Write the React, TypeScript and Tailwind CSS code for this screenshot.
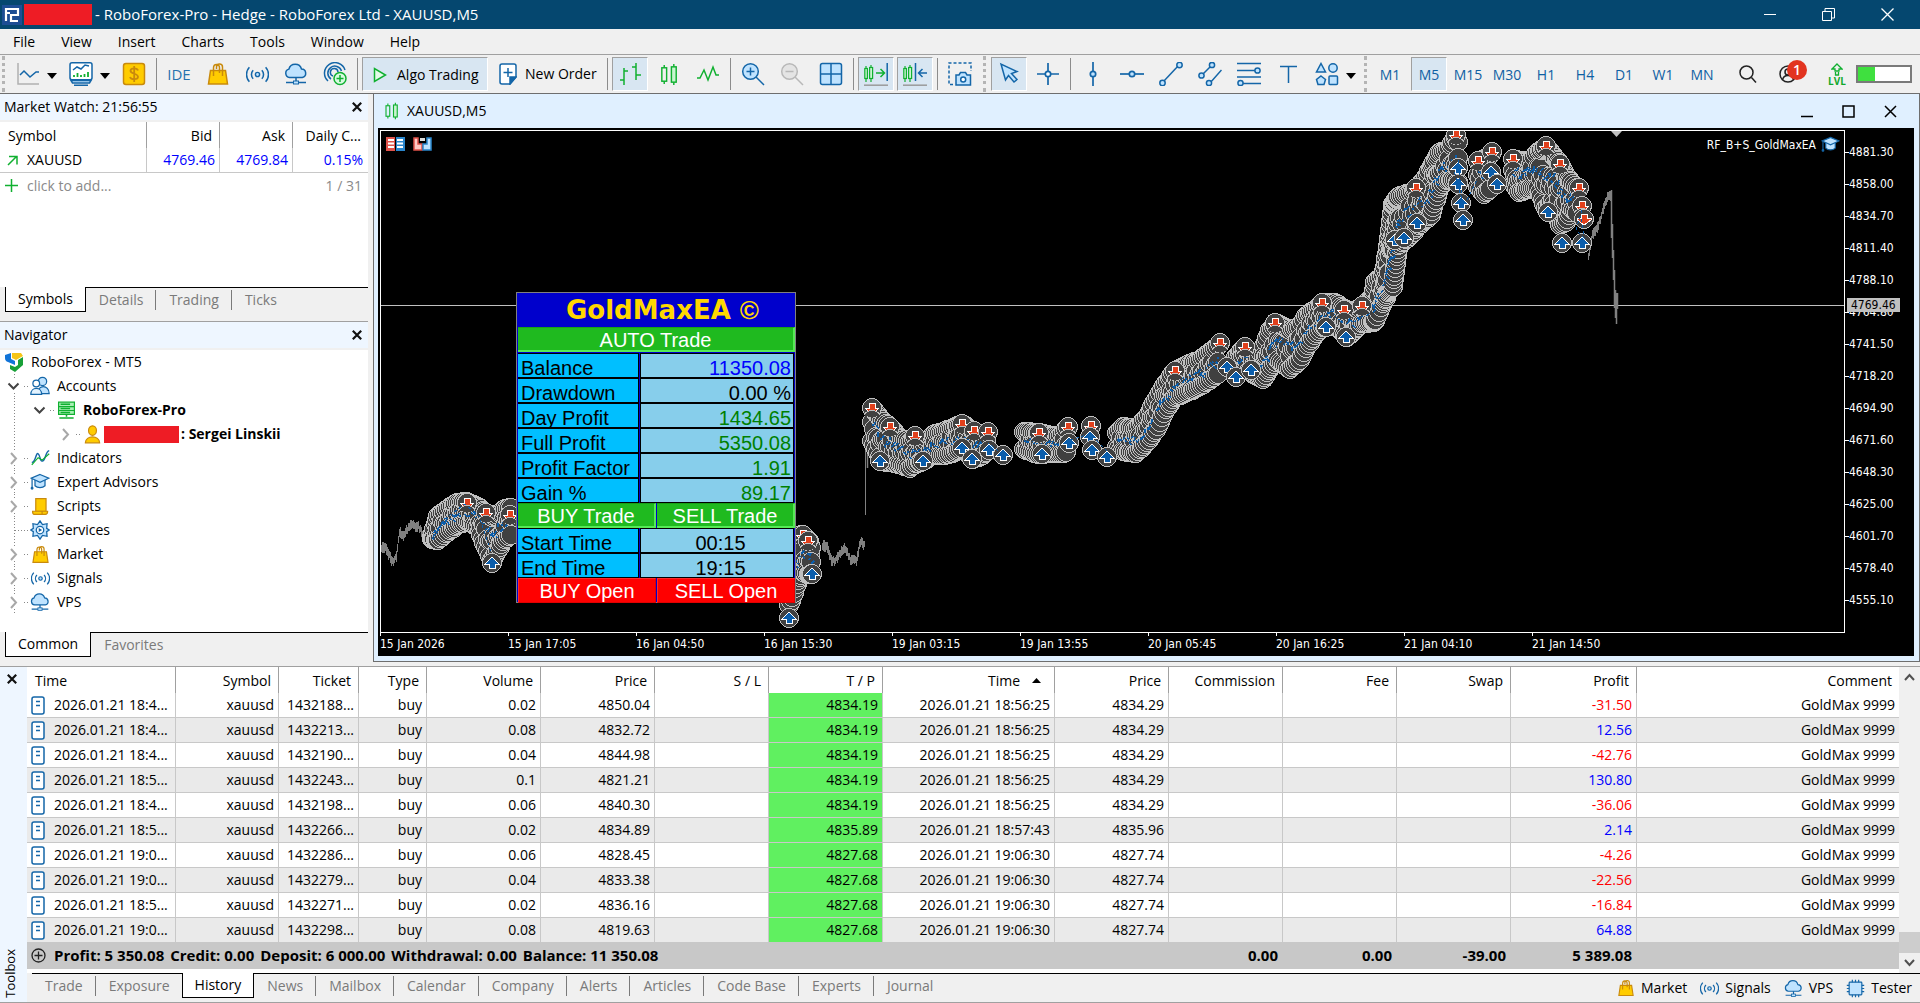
import React from "react";

const BLUE = "#1466a8";
const SKY = "#bfe3ff";
const GREEN = "#10b030";
const GOLD = "#ffcc00";
const AMBER = "#c98a0c";

type IconProps = { size?: number; children: React.ReactNode; color?: string; width?: number };

function Icon({ size = 24, children, color = BLUE, width = 1.5 }: IconProps) {
  return (
    <svg width={size} height={size} viewBox="0 0 24 24" fill="none" stroke={color} strokeWidth={width} aria-hidden="true" className="shrink-0">
      {children}
    </svg>
  );
}

const BagIcon = ({ size = 24 }: { size?: number }) => (
  <Icon size={size} color={AMBER}>
    <path d="M4.500 8.500h15l2 13.500h-19z" fill={GOLD} />
    <path d="M7.500 14V6a3 3.500 0 0 1 6 0v5M10.500 7V5a3 3 0 0 1 6 0v9" />
  </Icon>
);
const SignalIcon = ({ size = 24 }: { size?: number }) => (
  <Icon size={size}>
    <circle cx="12" cy="12" r="2.200" fill={SKY} />
    <path d="M7.500 7.500a6.500 6.500 0 0 0 0 9M16.500 7.500a6.500 6.500 0 0 1 0 9M3.500 4.500a11 11 0 0 0 0 15M20.500 4.500a11 11 0 0 1 0 15" strokeWidth="1.600" />
  </Icon>
);
const CloudIcon = ({ size = 24 }: { size?: number }) => (
  <Icon size={size}>
    <path d="M5.500 15.500a4.300 4.300 0 0 1-.6-8.400A6.500 6.500 0 0 1 17.500 7a4.300 4.300 0 0 1 .8 8.500z" fill={SKY} />
    <path d="M12 15.500v4M2 20.500h20M9.500 20.500h5" />
    <rect x="9.500" y="19" width="5" height="3" fill={SKY} strokeWidth="1" />
  </Icon>
);
const CapIcon = ({ size = 24, fill = SKY }: { size?: number; fill?: string }) => (
  <Icon size={size}>
    <path d="M6 9.500v7c3 3 9 3 12 0v-7" fill={fill} />
    <path d="M12 3 22.500 7.500 12 12.500 1.500 7.500z" fill={fill} />
    <path d="M2.500 8v11" />
    <circle cx="2.500" cy="19.500" r="1" fill={BLUE} />
  </Icon>
);
const CandlesIcon = ({ size = 24 }: { size?: number }) => (
  <Icon size={size} color={GREEN}>
    <path d="M6.500 2v3M6.500 19v3M16.500 1v3M16.500 20v3" />
    <rect x="4" y="5" width="5" height="14" />
    <rect x="14" y="4" width="5" height="16" fill="#c8f5d0" />
  </Icon>
);
const MiniCandles = () => (
  <g stroke={GREEN} strokeWidth="1.200">
    <path d="M2 4v16M7 3v17" />
    <rect x=".8" y="6.500" width="2.600" height="10" fill="#c8f5d0" />
    <rect x="5.600" y="5.500" width="3" height="11" fill="#c8f5d0" />
  </g>
);

function ToolButton({ label, active, caret, children }: { label: string; active?: boolean; caret?: boolean; children: React.ReactNode }) {
  return (
    <button
      type="button"
      aria-label={label}
      className={
        "flex h-[34px] shrink-0 items-center border " +
        (active ? "border-t-[#a0a0a0] border-l-[#a0a0a0] border-r-white border-b-white bg-[#d8e6f2] " : "border-transparent ") +
        (caret ? "w-[50px] gap-1 pl-[5px]" : "w-9 justify-center")
      }
    >
      {children}
      {caret && (
        <svg width="10" height="6" aria-hidden="true" className="mt-1 ml-[3px]">
          <path d="M0 0h10L5 6z" fill="#000" />
        </svg>
      )}
    </button>
  );
}

const Sep = () => <span className="mx-px h-8 w-px shrink-0 bg-[#8c8c8c]" />;
const Grip = () => <span className="mx-[2px] h-9 w-[3px] shrink-0 border-l-[3px] border-dotted border-[#b4b4b4]" />;

function Toolbar() {
  const frames = ["M1", "M5", "M15", "M30", "H1", "H4", "D1", "W1", "MN"];
  return (
    <div className="flex h-10 shrink-0 items-center gap-[3px] overflow-hidden border-y border-t-[#a0a0a0] border-b-[#6e6e6e] bg-[#f0f0f0] pr-2">
      <Grip />
      <ToolButton label="Line chart" caret>
        <Icon color="#b0b0b0"><path d="M2 1v21h21" /><path d="M4 13l4-4 6 6 6-5h3" stroke={BLUE} /></Icon>
      </ToolButton>
      <ToolButton label="Templates" caret>
        <Icon>
          <rect x="1" y="0.800" width="22" height="17" rx="2" fill="#fff" />
          <path d="M4 8l4-3 4 2 4-4 4 1" />
          <path d="M5 15v-2M8.500 15v-4M12 15v-2M15.500 15v-3M19 15v-5" stroke={GREEN} strokeWidth="1.800" />
          <path d="M2 18.500h20l-1.500 2.500h-17zM5 23.200h14" fill={SKY} />
        </Icon>
      </ToolButton>
      <ToolButton label="Quotes">
        <Icon color={AMBER}>
          <rect x="1.500" y="1.500" width="21" height="21" rx="2.500" fill={GOLD} />
          <path d="M16 8.500c-1-3-7.500-2.800-7.500.3 0 3.500 7.500 2.400 7.500 6 0 3.200-7 3.200-8 .2M12.200 4v16" strokeWidth="1.800" />
        </Icon>
      </ToolButton>
      <Sep />
      <button type="button" className="flex h-[34px] w-9 shrink-0 items-center justify-center text-[15px] text-[#2673ae]">IDE</button>
      <ToolButton label="Market"><BagIcon /></ToolButton>
      <ToolButton label="Signals"><SignalIcon size={23} /></ToolButton>
      <ToolButton label="VPS"><CloudIcon /></ToolButton>
      <ToolButton label="Social">
        <Icon>
          <path d="M5 19A10.500 10.500 0 1 1 22 8M8 17a7 7 0 1 1 10.500-8M10 14a3.800 3.800 0 1 1 5-4" />
          <circle cx="17" cy="16.500" r="6" fill="#d9fbe0" stroke={GREEN} />
          <path d="M17 13v7M13.500 16.500h7" stroke={GREEN} />
        </Icon>
      </ToolButton>
      <Sep />
      <button type="button" className="flex h-[34px] w-[126px] shrink-0 items-center gap-[10px] border border-t-[#a0a0a0] border-r-white border-b-white border-l-[#a0a0a0] bg-[#d8e6f2] pt-px pl-[10px] text-sm whitespace-nowrap">
        <svg width="14" height="16" aria-hidden="true" className="shrink-0"><path d="M1.500 1.500v13L12.500 8z" fill="#e4fbe8" stroke={GREEN} strokeWidth="1.500" /></svg>
        Algo Trading
      </button>
      <button type="button" className="flex h-[34px] w-[112px] shrink-0 items-center gap-2 pl-2 text-sm whitespace-nowrap">
        <svg width="18" height="22" fill="none" stroke={BLUE} strokeWidth="1.500" aria-hidden="true" className="shrink-0">
          <path d="M3 1h12q2 0 2 2v11l-6 7H3q-2 0-2-2V3q0-2 2-2z" fill="#fff" />
          <path d="M11 21v-7h6z" fill={BLUE} />
          <path d="M9 5v9M4.500 9.500h9" />
        </svg>
        New Order
      </button>
      <Sep />
      <ToolButton label="Bar chart" active>
        <Icon color={GREEN}><path d="M6 6v17M2 18h4M6 9h4M18 1v17M14 5h4M18 13h5" /></Icon>
      </ToolButton>
      <ToolButton label="Candlesticks"><CandlesIcon size={23} /></ToolButton>
      <ToolButton label="Line">
        <Icon color={GREEN}><path d="M1 16h3l4-8 4 10 5-13 3 8h3" /></Icon>
      </ToolButton>
      <Sep />
      <ToolButton label="Zoom in">
        <Icon><circle cx="9.500" cy="9.500" r="7.800" fill={SKY} /><path d="M15 15l8 8M9.500 5.500v8M5.500 9.500h8" /></Icon>
      </ToolButton>
      <ToolButton label="Zoom out">
        <Icon color="#b8b8b8"><circle cx="9.500" cy="9.500" r="7.800" fill="#e4e4e4" /><path d="M15 15l8 8M5.500 9.500h8" /></Icon>
      </ToolButton>
      <ToolButton label="Tile windows">
        <Icon><rect x="1.500" y="1.500" width="21" height="21" rx="2" fill={SKY} /><path d="M12 1.500v21M1.500 12h21" /></Icon>
      </ToolButton>
      <Sep />
      <ToolButton label="Auto scroll" active>
        <Icon><MiniCandles /><path d="M12 11h8M16.500 7l4 4-4 4" stroke={GREEN} /><path d="M23.200 1v18" /><path d="M0 23.200h24" stroke="#9a9a9a" /></Icon>
      </ToolButton>
      <ToolButton label="Chart shift" active>
        <Icon><MiniCandles /><path d="M12.500 1v18M24 11h-8M19.500 7l-4 4 4 4" /><path d="M0 23.200h24" stroke="#9a9a9a" /></Icon>
      </ToolButton>
      <Sep />
      <ToolButton label="Screenshot">
        <Icon>
          <path d="M5 22.500H1V1h22v8" strokeDasharray="3 2" />
          <path d="M8 13h3l1.500-2.500h5L19 13h3.500v10H8z" fill={SKY} />
          <circle cx="15.200" cy="17.500" r="2.500" fill="#fff" />
        </Icon>
      </ToolButton>
      <Grip />
      <ToolButton label="Cursor" active>
        <Icon><path d="M4 2l4.500 16 3-4.500 5.500 6.500 3-2.500-5.500-6 5.500-2z" fill={SKY} /></Icon>
      </ToolButton>
      <ToolButton label="Crosshair">
        <Icon width={1.7}><path d="M12 1v22M1 12h22" /><circle cx="12" cy="12" r="2.700" fill="#fff" /></Icon>
      </ToolButton>
      <Sep />
      <ToolButton label="Vertical line"><Icon width={1.7}><path d="M12 0v24" /><circle cx="12" cy="12" r="2.700" fill={SKY} /></Icon></ToolButton>
      <ToolButton label="Horizontal line"><Icon width={1.7}><path d="M0 12h24" /><circle cx="12" cy="12" r="2.700" fill={SKY} /></Icon></ToolButton>
      <ToolButton label="Trendline"><Icon><path d="M4 20L20 3" /><circle cx="3.500" cy="21" r="2.700" fill={SKY} /><circle cx="20.500" cy="3" r="2.700" fill={SKY} /></Icon></ToolButton>
      <ToolButton label="Channel">
        <Icon><path d="M4 13L14 3M12 21L23.500 8" /><circle cx="3.500" cy="13.500" r="2.600" fill={SKY} /><circle cx="14" cy="3" r="2.600" fill={SKY} /><circle cx="11" cy="21" r="2.600" fill={SKY} /></Icon>
      </ToolButton>
      <ToolButton label="Fibonacci">
        <Icon><path d="M0 1.500h24M0 8.500h18M0 15h24M5 21.500h19" /><circle cx="20.500" cy="8.500" r="2.600" fill={SKY} /><circle cx="3.500" cy="21" r="2.600" fill={SKY} /></Icon>
      </ToolButton>
      <ToolButton label="Text"><Icon><path d="M4 4.500h17M12.500 4.500V21" /></Icon></ToolButton>
      <ToolButton label="Objects" caret>
        <Icon><path d="M6 1.500l4.500 8.500h-9zM6 14l4.500 3.500L9 22.500H3l-1.500-5z" fill={SKY} /><circle cx="18" cy="6" r="4.200" fill={SKY} /><rect x="14" y="14" width="8.500" height="8.500" rx="1" fill={SKY} /></Icon>
      </ToolButton>
      <Grip />
      {frames.map((f) => (
        <button
          key={f}
          type="button"
          className={
            "flex h-[34px] w-9 shrink-0 items-center justify-center border pt-px text-sm text-[#0f60a3] " +
            (f === "M5" ? "border-t-[#a0a0a0] border-r-white border-b-white border-l-[#a0a0a0] bg-[#d8e6f2]" : "border-transparent")
          }
        >
          {f}
        </button>
      ))}
      <div className="ml-auto flex items-center">
        <button type="button" aria-label="Search">
          <svg width="18" height="18" fill="none" stroke="#222" strokeWidth="1.500" aria-hidden="true"><circle cx="7.500" cy="7.500" r="6.500" /><path d="M12.500 12.500l4.500 5" /></svg>
        </button>
        <button type="button" aria-label="Account, 1 notification" className="relative mr-[30px] ml-[22px]">
          <svg width="18" height="18" fill="none" stroke="#222" strokeWidth="1.500" aria-hidden="true"><circle cx="9" cy="9" r="8" /><circle cx="9" cy="7" r="3" /><path d="M3.500 15c1-6 10-6 11 0" /></svg>
          <span className="absolute -top-[5px] left-2 flex size-5 items-center justify-center rounded-full bg-[#e23420] text-sm font-semibold text-white">1</span>
        </button>
        <span className="flex w-5 flex-col items-center text-[10px] leading-[10px] font-bold text-[#10a82c]">
          <svg width="12" height="13" aria-hidden="true"><path d="M6 1l5 5H8v2H4V6H1zM4.500 9v3h3V9" fill="none" stroke={GREEN} strokeWidth="1.300" /></svg>
          LVL
        </span>
        <span className="ml-[9px] h-[18px] w-14 border-2 border-[#7a7a7a] bg-white">
          <span className="block h-full w-1/3 bg-[#3fe03f]" />
        </span>
      </div>
    </div>
  );
}

function CloseButton({ label }: { label: string }) {
  return (
    <button type="button" aria-label={label} className="flex size-4 items-center justify-center">
      <svg width="10" height="10" stroke="#111" strokeWidth="2.200" aria-hidden="true"><path d="M.8.8l8.400 8.400M9.200.8L.8 9.200" /></svg>
    </button>
  );
}

function PanelHead({ title }: { title: string }) {
  return (
    <div className="flex h-[26px] shrink-0 items-center justify-between bg-[#eef6ff] pr-[3px] pl-1 text-sm">
      <h2>{title}</h2>
      <CloseButton label={"Close " + title} />
    </div>
  );
}

function Tabs({ items, active, className }: { items: string[]; active: string; className: string }) {
  const at = items.indexOf(active);
  return (
    <div role="tablist" className={"flex shrink-0 items-start " + className}>
      {items.map((t, i) => (
        <button
          key={t}
          role="tab"
          type="button"
          aria-selected={t === active}
          className={
            t === active
              ? "h-[25px] border border-t-0 border-black bg-white px-3 pb-px text-sm"
              : "flex h-[25px] items-center border-t border-black text-sm text-[#7a7a7a]"
          }
        >
          {t === active ? t : (
            <span className={"pr-3 pl-[13px] leading-5 " + (i + 1 < items.length && i + 1 !== at ? "border-r border-[#7a7a7a]" : "")}>{t}</span>
          )}
        </button>
      ))}
      <span className="flex-1 border-t border-black" />
    </div>
  );
}

function MarketWatch() {
  return (
    <section className="flex h-[227px] shrink-0 flex-col">
      <PanelHead title="Market Watch: 21:56:55" />
      <div className="mt-[2px] min-h-0 flex-1 bg-white">
        <table className="w-full table-fixed border-separate border-spacing-0 text-sm">
          <colgroup><col className="w-[147px]" /><col className="w-[73px]" /><col className="w-[73px]" /><col /></colgroup>
          <thead>
            <tr className="h-[26px]">
              <th className="border-r border-[#a0a0a0] pt-[2px] pl-2 text-left font-normal">Symbol</th>
              <th className="border-r border-[#a0a0a0] pt-[2px] pr-[7px] text-right font-normal">Bid</th>
              <th className="border-r border-[#a0a0a0] pt-[2px] pr-[7px] text-right font-normal">Ask</th>
              <th className="pt-[2px] pr-[7px] text-right font-normal whitespace-nowrap">Daily C...</th>
            </tr>
          </thead>
          <tbody>
            <tr className="h-[25px] text-right text-[#0000ff]">
              <td className="border-r border-b border-[#c8c8c8] pl-[7px] text-left text-black">
                <span className="flex items-center gap-[9px]">
                  <svg width="11" height="11" fill="none" stroke={GREEN} strokeWidth="1.500" aria-hidden="true"><path d="M1 10L9.500 1.500M2 1.500h8v8" /></svg>
                  XAUUSD
                </span>
              </td>
              <td className="border-r border-b border-[#c8c8c8] pr-1">4769.46</td>
              <td className="border-r border-b border-[#c8c8c8] pr-1">4769.84</td>
              <td className="border-b border-[#c8c8c8] pr-[5px]">0.15%</td>
            </tr>
          </tbody>
        </table>
        <div className="flex h-[25px] items-center pr-[6px] pl-1 text-sm text-[#8a8a8a]">
          <svg width="15" height="15" stroke={GREEN} strokeWidth="1.500" aria-hidden="true"><path d="M7.500 1v13M1 7.500h13" /></svg>
          <button type="button" className="ml-2">click to add...</button>
          <span className="ml-auto">1 / 31</span>
        </div>
      </div>
      <Tabs items={["Symbols", "Details", "Trading", "Ticks"]} active="Symbols" className="h-[34px] pl-[5px]" />
    </section>
  );
}

type Node = { label: React.ReactNode; icon: React.ReactNode; level: number; state: "open" | "closed" | "none"; bold?: boolean };

const nodes: Node[] = [
  { label: "Accounts", level: 0, state: "open", icon: <Icon size={20}><circle cx="15" cy="6.500" r="5" fill={SKY} /><path d="M9 21c0-11 14-11 14 0z" fill={SKY} /><circle cx="7.500" cy="9" r="4" fill="#fff" /><path d="M1 22c0-9.500 13-9.500 13 0z" fill="#e3f3ff" /></Icon> },
  { label: "RoboForex-Pro", level: 1, state: "open", bold: true, icon: <Icon size={19} color={GREEN}><path d="M2 1.500h20v5.500H2zM2 7h20v5H2zM2 12h20v5H2z" fill="#a8f0b4" /><path d="M4.500 4.200h12M4.500 9.500h12M4.500 14.500h12M12 17v3M3 21.500h18" strokeWidth="2" /></Icon> },
  {
    label: <span className="flex items-center gap-[2px]"><span className="-ml-[5px] h-[17px] w-[75px] bg-[#ee1c25]" />: Sergei Linskii</span>,
    level: 2, state: "closed", bold: true,
    icon: <Icon size={19} color={AMBER}><ellipse cx="12" cy="7" rx="5" ry="6" fill={GOLD} /><path d="M3 22.500c0-10 18-10 18 0z" fill={GOLD} /></Icon>,
  },
  { label: "Indicators", level: 0, state: "closed", icon: <Icon size={19}><path d="M1 17c5 0 5-13 8-11s2 11 6 9 3-12 8-13" strokeWidth="1.800" /><path d="M1 20l8-9 5 3 9-8" stroke={GREEN} /></Icon> },
  { label: "Expert Advisors", level: 0, state: "closed", icon: <CapIcon size={20} /> },
  { label: "Scripts", level: 0, state: "closed", icon: <Icon size={19} color={AMBER}><path d="M6 2h13v16H6z" fill={GOLD} /><path d="M2 18h12v4H4q-2 0-2-4zM14 18h7q0 4-3 4h-4" fill={GOLD} /></Icon> },
  { label: "Services", level: 0, state: "none", icon: <Icon size={20}><path d="M12 1l3 4.500 5.500-1L20 10l3 2-3 2 .5 5.500-5.500-1L12 23l-3-4.500-5.500 1L4 14l-3-2 3-2-.5-5.500 5.500 1z" fill={SKY} /><circle cx="12" cy="12" r="4.500" fill="#fff" /><path d="M10.500 9.500v5l4-2.500z" fill={BLUE} stroke="none" /></Icon> },
  { label: "Market", level: 0, state: "closed", icon: <BagIcon size={19} /> },
  { label: "Signals", level: 0, state: "closed", icon: <SignalIcon size={19} /> },
  { label: "VPS", level: 0, state: "closed", icon: <CloudIcon size={20} /> },
];

function Toggle({ state, level }: { state: Node["state"]; level: number }) {
  return (
    <svg width="26" height="24" fill="none" aria-hidden="true" className="shrink-0 overflow-visible">
      {level === 0 && <path d={state === "none" ? "M10.500 0v24" : "M10.500 0v5M10.500 19v5"} stroke="#888" strokeDasharray="1 2" />}
      {level === 1 && <path d="M-15.500 0v24" stroke="#888" strokeDasharray="1 2" />}
      {level === 2 && <path d="M-41.500 0v24" stroke="#888" strokeDasharray="1 2" />}
      <path d={state === "none" ? "M11 12.500h15" : "M20 12.500h6"} stroke="#888" strokeDasharray="1 2" />
      {state === "open" && <path d="M4.500 9.500l5 5 5-5" stroke="#444" strokeWidth="2" />}
      {state === "closed" && <path d="M7 7l5 5.500-5 5.500" stroke="#a8a8a8" strokeWidth="2" />}
    </svg>
  );
}

function Navigator() {
  return (
    <section className="flex min-h-0 flex-1 flex-col border-t border-[#a0a0a0]">
      <PanelHead title="Navigator" />
      <div className="mt-[2px] min-h-0 flex-1 overflow-hidden bg-white text-sm">
        <div className="flex h-6 items-center gap-[7px] pl-1">
          <svg width="20" height="20" aria-hidden="true">
            <path d="M1 3l6-2 0 6 4 2 0 4-7-3q-3-1-3-4z" fill="#1174d8" />
            <path d="M8 1l9 0 2 3-7 4-4-2z" fill="#f5c518" />
            <path d="M19 5v8l-8 7-5-3v-4l5 2 3-2V8z" fill="#18a038" />
          </svg>
          RoboForex - MT5
        </div>
        <ul>
          {nodes.map((n, i) => (
            <li key={i} className={"flex h-6 items-center whitespace-nowrap " + (n.level === 0 ? "pl-1" : n.level === 1 ? "pl-[30px]" : "pl-[56px]") + (n.bold ? " font-bold" : "")}>
              <Toggle state={n.state} level={n.level} />
              <span className="flex w-5 justify-center">{n.icon}</span>
              <span className="ml-[7px]">{n.label}</span>
            </li>
          ))}
        </ul>
      </div>
      <Tabs items={["Common", "Favorites"]} active="Common" className="h-[30px] pl-[5px]" />
    </section>
  );
}

/* Trade markers: [x, highest centre, lowest centre] of each band sample. */
const bands: number[][][] = [
  [[432, 537, 539], [438, 516, 540], [450, 507, 530], [457, 503, 525], [467, 502, 521], [478, 507, 527], [486, 513, 547], [492, 517, 560], [498, 515, 550], [503, 510, 541], [513, 507, 533]],
  [[789, 560, 605], [798, 536, 580], [803, 535, 572], [809, 541, 574], [812, 552, 574]],
  [[872, 408, 441], [882, 420, 461], [890, 427, 462], [900, 438, 464], [910, 442, 468], [916, 438, 463], [923, 447, 461], [933, 435, 455], [943, 432, 455], [953, 428, 453], [962, 424, 448], [973, 431, 459], [983, 436, 455], [988, 432, 450]],
  [[1024, 432, 449], [1038, 433, 454], [1052, 436, 453], [1060, 436, 453], [1068, 427, 452]],
  [[1117, 433, 447], [1123, 427, 451], [1136, 429, 453], [1147, 417, 442], [1156, 400, 430], [1166, 383, 409], [1175, 371, 397], [1187, 365, 392], [1198, 361, 387], [1210, 352, 380], [1220, 345, 372]],
  [[1236, 357, 372], [1245, 347, 368], [1255, 363, 375], [1263, 350, 379], [1270, 330, 368], [1278, 324, 360], [1290, 330, 369], [1300, 327, 360], [1306, 316, 348], [1315, 310, 335], [1323, 303, 327], [1335, 303, 325], [1347, 310, 337], [1353, 313, 332], [1362, 307, 323], [1373, 297, 322], [1375, 282, 320], [1383, 275, 303], [1388, 250, 292], [1393, 205, 287], [1398, 197, 245], [1410, 193, 236], [1417, 188, 227], [1424, 180, 220], [1431, 168, 215], [1439, 153, 188], [1447, 150, 180], [1456, 138, 180], [1460, 145, 184]],
  [[1478, 161, 187], [1484, 160, 194], [1492, 153, 187]],
  [[1513, 159, 183], [1519, 161, 192], [1530, 161, 188], [1538, 152, 188], [1546, 147, 208], [1553, 155, 200], [1560, 164, 225], [1566, 176, 222], [1571, 182, 208], [1579, 190, 214]],
];

const ups = [[492, 563], [789, 618], [812, 574], [880, 461], [923, 461], [962, 448], [972, 459], [989, 450], [1003, 455], [1042, 454], [1069, 443], [1090, 437], [1092, 450], [1107, 457], [1227, 367], [1236, 377], [1251, 370], [1326, 327], [1346, 337], [1395, 240], [1404, 238], [1417, 223], [1458, 168], [1458, 184], [1461, 203], [1463, 220], [1491, 172], [1497, 184], [1548, 212], [1562, 243], [1582, 243]];
const downs = [[467, 503], [486, 513], [510, 515], [803, 535], [808, 541], [872, 408], [890, 427], [915, 436], [962, 424], [974, 431], [988, 432], [1039, 433], [1068, 427], [1091, 426], [1175, 371], [1220, 343], [1245, 347], [1275, 323], [1322, 303], [1344, 310], [1362, 306], [1416, 188], [1456, 135], [1478, 161], [1492, 152], [1513, 159], [1546, 146], [1560, 164], [1579, 188], [1582, 206]];

function buildMarkers() {
  let seed = 71;
  const rnd = () => (seed = (seed * 16807) % 2147483647) / 2147483647;
  const circles: number[][] = [];
  const dashes: string[] = [];
  bands.forEach((band) => {
    for (let i = 0; i + 1 < band.length; i++) {
      const [x0, t0, b0] = band[i];
      const [x1, t1, b1] = band[i + 1];
      const reach = Math.max(x1 - x0, Math.abs(t1 - t0) / 2, Math.abs(b1 - b0) / 2);
      const steps = Math.max(1, Math.round(reach / 2));
      for (let s = 0; s < steps; s++) {
        const k = s / steps;
        const x = Math.round(x0 + (x1 - x0) * k);
        const top = t0 + (t1 - t0) * k;
        const bot = b0 + (b1 - b0) * k;
        circles.push([x, Math.round(top)]);
        if (bot - top > 18) circles.push([x, Math.round(top + (bot - top) * (0.3 + rnd() * 0.4))]);
        circles.push([x, Math.round(bot)]);
        const mid = Math.round(top + (bot - top) * (0.35 + rnd() * 0.3));
        dashes.push(`M${x} ${mid}l${Math.round(rnd() * 3)} ${Math.round(rnd() * 8 - 5)}`);
      }
    }
  });
  return { circles, dashes: dashes.join("") };
}

const markers = buildMarkers();

function priceTrace(points: number[][]) {
  let seed = 13;
  const rnd = () => (seed = (seed * 16807) % 2147483647) / 2147483647;
  let d = "";
  for (let i = 0; i + 1 < points.length; i++) {
    const [x0, y0] = points[i];
    const [x1, y1] = points[i + 1];
    for (let x = x0; x < x1; x++) {
      const y = y0 + ((y1 - y0) * (x - x0)) / (x1 - x0);
      d += `M${x}.5 ${Math.round(y - 2 - rnd() * 4)}V${Math.round(y + 2 + rnd() * 4)}`;
    }
  }
  return d;
}

const traces = [
  [[381, 547], [385, 548], [392, 562], [396, 556], [399, 532], [403, 535], [410, 525], [418, 527], [424, 537]],
  [[822, 545], [827, 548], [831, 561], [835, 560], [844, 547], [850, 560], [856, 560], [860, 542], [865, 545]],
  [[1588, 255], [1592, 235], [1597, 228], [1604, 205], [1608, 195], [1612, 195]],
];

const Ring = ({ x, y }: { x: number; y: number }) => <circle cx={x} cy={y} r="9.500" />;

function PlotCanvas() {
  return (
    <svg width="100%" height="100%" className="absolute inset-0" role="img" aria-label="XAUUSD price chart with trade markers">
      <g transform="translate(-381 -131)">
        <path d="M381 305.500H2600" stroke="#c0c0c0" />
        <g stroke="#808080" strokeWidth="1">
          {traces.map((t, i) => <path key={i} d={priceTrace(t)} />)}
          <path d="M865.500 515v-88" />
          <path d="M867.500 468v-40M1611.500 190v48M1612.500 224v34M1613.500 250v30M1614.500 270v38M1615.500 290v28M1616.500 293v31M1617.500 293v16" strokeWidth="1.500" />
        </g>
        <path d="M1611 131h11l-5.500 6z" fill="#c0c0c0" />
        <g fill="#404040" stroke="#c0c0c0" strokeWidth="1" shapeRendering="crispEdges">
          {markers.circles.map(([x, y], i) => <Ring key={i} x={x} y={y} />)}
        </g>
        <path d={markers.dashes} stroke="#0a5dab" strokeWidth="1.500" fill="none" shapeRendering="crispEdges" />
        {downs.map(([x, y], i) => (
          <g key={i} shapeRendering="crispEdges">
            <g fill="#404040" stroke="#c0c0c0"><Ring x={x} y={y} /></g>
            <path transform={`translate(${x} ${y})`} d="M-3-5h6v5h4L0 7l-7-7h4z" fill="#e2401c" stroke="#fff" />
            <path d={`M${x - 8} ${y + 7}a9.500 9.500 0 0 1 16 0L${x} ${y + 10}z`} fill="#404040" />
            <path d={`M${x - 8} ${y + 7}a9.500 9.500 0 0 1 16 0`} fill="none" stroke="#c0c0c0" />
          </g>
        ))}
        {ups.concat([[1584, 219]]).map(([x, y], i) => (
          <g key={i} shapeRendering="crispEdges">
            <g fill="#404040" stroke="#c0c0c0"><Ring x={x} y={y} /></g>
            {x === 1584 ? (
              <path transform={`translate(${x} ${y})`} d="M-3-5h6v4h4v2L0 6l-7-5v-2h4z" fill="#e2401c" stroke="#fff" />
            ) : (
              <path transform={`translate(${x} ${y})`} d="M0-6l7 7H3v4h-6V1h-4z" fill="#0a5dab" stroke="#fff" />
            )}
          </g>
        ))}
        <path d="M1582 210l-6 20 8 8-3-20M1458 160l4 40-8-30M433 540l10-20 22-16 14 12 10 30 3 8M1003 455l-15-12M1070 440l20-6 18 18M1467 200l10-20" stroke="#0a5dab" fill="none" strokeDasharray="3 3" shapeRendering="crispEdges" />
      </g>
    </svg>
  );
}

const stats = [
  ["Balance", "11350.08", "text-[#0000ff]"],
  ["Drawdown", "0.00 %", "text-black"],
  ["Day Profit", "1434.65", "text-[#008000]"],
  ["Full Profit", "5350.08", "text-[#008000]"],
  ["Profit Factor", "1.91", "text-[#008000]"],
  ["Gain %", "89.17", "text-[#008000]"],
];
const times = [["Start Time", "00:15"], ["End Time", "19:15"]];

function EaRow({ name, children, className }: { name: string; children: React.ReactNode; className: string }) {
  return (
    <div className="flex h-[25px] gap-px">
      <dt className="h-[25px] w-[121px] border border-l-0 border-black bg-[#00bfff] pt-1 pl-[3px] leading-5">{name}</dt>
      <dd className={"mr-px h-[25px] flex-1 border border-black bg-[#87ceeb] pt-1 leading-5 " + className}>{children}</dd>
    </div>
  );
}

function EaPanel() {
  const green = "block h-[25px] border-r-2 border-b-2 border-t border-[#55ea55] border-t-[#18a018] bg-[#1fba1f] pt-[2px] leading-5";
  const red = "block h-[25px] flex-1 border border-[#ff2a2a] border-b-[#e00000] border-r-[#e00000] bg-[#ff0000] leading-5";
  return (
    <div className="absolute top-[161px] left-[135px] w-[280px] border border-[#808080] bg-[#0000cc] pl-px font-['Liberation_Sans',Arial,sans-serif] text-xl text-black">
      <h3 className="flex h-[34px] items-center justify-center gap-[9px] pl-3 text-[26px] leading-[34px] font-bold whitespace-nowrap text-[#ffd700]">
        <span className="font-['DejaVu_Sans',sans-serif]">GoldMaxEA</span>
        <span>©</span>
      </h3>
      <button type="button" className={green + " w-full text-white"}>AUTO Trade</button>
      <dl className="mt-px">
        {stats.map(([n, v, c]) => <EaRow key={n} name={n} className={"pr-[2px] text-right " + c}>{v}</EaRow>)}
      </dl>
      <div className="flex gap-px text-white">
        <button type="button" className={green + " flex-1"}>BUY Trade</button>
        <button type="button" className={green + " flex-1"}>SELL Trade</button>
      </div>
      <dl>{times.map(([n, v]) => <EaRow key={n} name={n} className="pl-[7px] text-center">{v}</EaRow>)}</dl>
      <div className="-mb-px flex gap-px text-white">
        <button type="button" className={red}>BUY Open</button>
        <button type="button" className={red}>SELL Open</button>
      </div>
    </div>
  );
}

const prices = ["4881.30", "4858.00", "4834.70", "4811.40", "4788.10", "4764.80", "4741.50", "4718.20", "4694.90", "4671.60", "4648.30", "4625.00", "4601.70", "4578.40", "4555.10"];
const dates = ["15 Jan 2026", "15 Jan 17:05", "16 Jan 04:50", "16 Jan 15:30", "19 Jan 03:15", "19 Jan 13:55", "20 Jan 05:45", "20 Jan 16:25", "21 Jan 04:10", "21 Jan 14:50"];

function ChartWindow() {
  return (
    <section className="flex min-w-0 flex-1 flex-col border-r border-b border-l border-[#6e6e6e] bg-[#e0f0ff] pr-[5px] pb-[5px] pl-1">
      <div className="flex h-[34px] shrink-0 items-center pl-[5px] text-sm">
        <CandlesIcon size={18} />
        <h2 className="ml-[6px]">XAUUSD,M5</h2>
        <div className="ml-auto flex items-center gap-[29px] pr-[17px]">
          <button type="button" aria-label="Minimize chart"><svg width="12" height="13" stroke="#000" strokeWidth="1.500" aria-hidden="true"><path d="M0 11.500h12" /></svg></button>
          <button type="button" aria-label="Maximize chart"><svg width="13" height="13" fill="none" stroke="#000" strokeWidth="1.500" aria-hidden="true"><path d="M1 1h11v11H1z" /></svg></button>
          <button type="button" aria-label="Close chart"><svg width="13" height="13" stroke="#000" strokeWidth="1.500" aria-hidden="true"><path d="M1 1l11 11M12 1L1 12" /></svg></button>
        </div>
      </div>
      <div className="flex min-h-0 flex-1 flex-col bg-black pt-[2px] pl-[2px] font-['DejaVu_Sans_Condensed','Open_Sans',sans-serif] text-xs text-white">
        <div className="flex min-h-0 flex-1">
          <div className="relative min-w-0 flex-1 overflow-hidden border border-white">
            <PlotCanvas />
            <div className="absolute top-[6px] left-[5px] flex gap-2">
              <button type="button" aria-label="One click trading">
                <svg width="19" height="14" aria-hidden="true"><path d="M0 0h9v14H0z" fill="#e0524a" /><path d="M10 0h9v14h-9z" fill="#2a86cc" /><path d="M2 3h6M2 6.500h6M2 10h6M11 3h6M11 6.500h6M11 10h6" stroke="#fff" strokeWidth="2" /></svg>
              </button>
              <button type="button" aria-label="Depth of market">
                <svg width="19" height="14" aria-hidden="true"><path d="M1 1h4v6h4v6H1z" fill="#ffc9c4" stroke="#e0524a" strokeWidth="1.500" /><path d="M18 1h-4v6h-4v6h8z" fill="#bfe3ff" stroke="#2a86cc" strokeWidth="1.500" /><path d="M7 1h5v3H7z" fill="#ddd" /></svg>
              </button>
            </div>
            <div className="absolute top-1 right-1 flex items-center gap-[5px]">
              RF_B+S_GoldMaxEA <CapIcon size={19} />
            </div>
            <EaPanel />
          </div>
          <div className="relative w-[69px] shrink-0 overflow-hidden pt-[6px]">
            {prices.map((p) => (
              <div key={p} className="flex h-8 items-center">
                <span className="h-px w-[4px] bg-white" />
                {p}
              </div>
            ))}
            <span className="absolute top-[168px] left-[2px] h-[14px] bg-[#c0c0c0] px-1 leading-[14px] text-black">4769.46</span>
          </div>
        </div>
        <div className="flex h-[23px] shrink-0 overflow-hidden">
          {dates.map((d) => (
            <div key={d} className="w-32 shrink-0 whitespace-nowrap">
              <span className="block h-[3px] w-px bg-white" />
              {d}
            </div>
          ))}
        </div>
      </div>
    </section>
  );
}

const rows = [
  ["2026.01.21 18:4...", "1432188...", "0.02", "4850.04", "4834.19", "2026.01.21 18:56:25", "4834.29", "-31.50"],
  ["2026.01.21 18:4...", "1432213...", "0.08", "4832.72", "4834.19", "2026.01.21 18:56:25", "4834.29", "12.56"],
  ["2026.01.21 18:4...", "1432190...", "0.04", "4844.98", "4834.19", "2026.01.21 18:56:25", "4834.29", "-42.76"],
  ["2026.01.21 18:5...", "1432243...", "0.1", "4821.21", "4834.19", "2026.01.21 18:56:25", "4834.29", "130.80"],
  ["2026.01.21 18:4...", "1432198...", "0.06", "4840.30", "4834.19", "2026.01.21 18:56:25", "4834.29", "-36.06"],
  ["2026.01.21 18:5...", "1432266...", "0.02", "4834.89", "4835.89", "2026.01.21 18:57:43", "4835.96", "2.14"],
  ["2026.01.21 19:0...", "1432286...", "0.06", "4828.45", "4827.68", "2026.01.21 19:06:30", "4827.74", "-4.26"],
  ["2026.01.21 19:0...", "1432279...", "0.04", "4833.38", "4827.68", "2026.01.21 19:06:30", "4827.74", "-22.56"],
  ["2026.01.21 18:5...", "1432271...", "0.02", "4836.16", "4827.68", "2026.01.21 19:06:30", "4827.74", "-16.84"],
  ["2026.01.21 19:0...", "1432298...", "0.08", "4819.63", "4827.68", "2026.01.21 19:06:30", "4827.74", "64.88"],
];
const heads = ["Symbol", "Ticket", "Type", "Volume", "Price", "S / L", "T / P", "Time", "Price", "Commission", "Fee", "Swap", "Profit"];

function HistoryTable() {
  const cell = "border-r border-b border-[#c8c8c8] pr-1";
  return (
    <table className="w-full table-fixed border-separate border-spacing-0 text-right text-sm whitespace-nowrap">
      <colgroup>
        <col className="w-[149px]" /><col className="w-[103px]" /><col className="w-[80px]" /><col className="w-[68px]" />
        <col className="w-[114px]" /><col className="w-[114px]" /><col className="w-[114px]" /><col className="w-[114px]" />
        <col className="w-[172px]" /><col className="w-[114px]" /><col className="w-[114px]" /><col className="w-[114px]" />
        <col className="w-[114px]" /><col className="w-[126px]" /><col />
      </colgroup>
      <thead>
        <tr className="h-[26px]">
          <th className="border-r border-[#a0a0a0] pt-px pl-2 text-left font-normal">Time</th>
          {heads.map((h, i) => (
            <th key={i} className="border-r border-[#a0a0a0] pt-px pr-[7px] font-normal">
              {h === "Time" ? (
                <span className="inline-flex items-center gap-3 pr-[6px]">Time<svg width="9" height="5" aria-hidden="true"><path d="M0 5h9L4.500 0z" /></svg></span>
              ) : h}
            </th>
          ))}
          <th className="pt-px pr-[7px] font-normal">Comment</th>
        </tr>
      </thead>
      <tbody>
        {rows.map((r, i) => (
          <tr key={r[1]} className={"h-[25px] " + (i % 2 ? "bg-[#eaeaea]" : "bg-white")}>
            <td className={cell + " pl-1 text-left"}>
              <span className="flex items-center gap-[9px]">
                <svg width="14" height="19" fill="#fff" stroke={BLUE} strokeWidth="1.500" aria-hidden="true"><rect x="1" y="1" width="12" height="17" rx="2" /><path d="M5 5.500h4M5 9.500h4" /></svg>
                {r[0]}
              </span>
            </td>
            <td className={cell}>xauusd</td>
            <td className={cell}>{r[1]}</td>
            <td className={cell}>buy</td>
            <td className={cell}>{r[2]}</td>
            <td className={cell}>{r[3]}</td>
            <td className={cell} />
            <td className={cell + " bg-[#60f060]"}>{r[4]}</td>
            <td className={cell}>{r[5]}</td>
            <td className={cell}>{r[6]}</td>
            <td className={cell} />
            <td className={cell} />
            <td className={cell} />
            <td className={cell + (r[7][0] === "-" ? " text-[#ff0000]" : " text-[#0000ff]")}>{r[7]}</td>
            <td className="border-b border-[#c8c8c8] pr-1">GoldMax 9999</td>
          </tr>
        ))}
      </tbody>
      <tfoot>
        <tr className="h-[26px] bg-[#c8c8c8] text-[15px] leading-5 font-bold">
          <td colSpan={10} className="pb-[2px] pl-1 text-left">
            <span className="flex items-center gap-2">
              <svg width="15" height="15" fill="none" stroke="#222" strokeWidth="1.300" aria-hidden="true"><circle cx="7.500" cy="7.500" r="6.500" /><path d="M7.500 3.500v8M3.500 7.500h8" /></svg>
              <span className="flex gap-[6px]">
                <span>Profit: 5 350.08</span><span>Credit: 0.00</span><span>Deposit: 6 000.00</span><span>Withdrawal: 0.00</span><span>Balance: 11 350.08</span>
              </span>
            </span>
          </td>
          <td className="pr-[5px] pb-[2px]">0.00</td>
          <td className="pr-[5px] pb-[2px]">0.00</td>
          <td className="pr-[5px] pb-[2px]">-39.00</td>
          <td className="pr-[5px] pb-[2px]">5 389.08</td>
          <td />
        </tr>
      </tfoot>
    </table>
  );
}

function Toolbox() {
  const tabs = ["Trade", "Exposure", "History", "News", "Mailbox", "Calendar", "Company", "Alerts", "Articles", "Code Base", "Experts", "Journal"];
  return (
    <section className="flex shrink-0 border-t border-b border-[#a0a0a0]">
      <div className="flex w-[27px] shrink-0 flex-col items-center justify-between bg-[#eef6ff] pt-1 pr-1 pb-1">
        <CloseButton label="Close toolbox" />
        <h2 className="mr-1 rotate-180 text-[13px] leading-4 [writing-mode:vertical-rl]">Toolbox</h2>
      </div>
      <div className="min-w-0 flex-1">
        <div className="flex bg-white">
          <div className="min-w-0 flex-1 pb-1"><HistoryTable /></div>
          <div className="flex w-[21px] shrink-0 flex-col items-center bg-[#f0f0f0] py-[6px]">
            <svg width="11" height="8" fill="none" stroke="#505050" strokeWidth="2" aria-hidden="true"><path d="M1 7l4.500-5L10 7" /></svg>
            <span className="mt-auto mb-[6px] h-[21px] w-full bg-[#cdcdcd]" />
            <svg width="11" height="8" fill="none" stroke="#505050" strokeWidth="2" aria-hidden="true"><path d="M1 1l4.500 5L10 1" /></svg>
          </div>
        </div>
        <div className="flex h-[29px]">
          <Tabs items={tabs} active="History" className="flex-1 pl-[5px]" />
          <div className="flex items-center gap-[13px] border-t border-black pr-2 text-sm">
            <a href="#market" className="flex items-center gap-[6px]"><BagIcon size={18} />Market</a>
            <a href="#signals" className="flex items-center gap-[6px]"><SignalIcon size={19} />Signals</a>
            <a href="#vps" className="flex items-center gap-[6px]"><CloudIcon size={19} />VPS</a>
            <a href="#tester" className="flex items-center gap-[6px]">
              <Icon size={19}><path d="M8 1v22M12 1v22M16 1v22M1 8h22M1 12h22M1 16h22" /><rect x="4" y="4" width="16" height="16" rx="1" fill={SKY} /></Icon>
              Tester
            </a>
          </div>
        </div>
      </div>
    </section>
  );
}

export default function App() {
  return (
    <div className="flex h-screen flex-col overflow-hidden bg-[#f0f0f0] font-['Open_Sans','Noto_Sans',sans-serif] text-black">
      <header className="flex h-[29px] shrink-0 items-center bg-[#05476f] pl-[2px] text-[15px] text-white">
        <svg width="20" height="20" fill="none" stroke="#fff" strokeWidth="2.200" aria-hidden="true"><path d="M0 0h20v20H0z" fill="#1d4d94" stroke="none" /><path d="M9 4H4v12M4 8h4M9 4h7v6H9v6h7" /></svg>
        <span className="ml-[2px] h-[21px] w-[68px] bg-[#ee1c25]" />
        <h1 className="ml-[3px]">- RoboForex-Pro - Hedge - RoboForex Ltd - XAUUSD,M5</h1>
        <div className="ml-auto flex items-center gap-[46px] pr-[26px]">
          <button type="button" aria-label="Minimize"><svg width="12" height="13" stroke="#fff" aria-hidden="true"><path d="M0 6.500h12" /></svg></button>
          <button type="button" aria-label="Restore"><svg width="13" height="13" fill="none" stroke="#fff" aria-hidden="true"><path d="M.5 3.500h9v9h-9zM3 3V.5h9.500V10H10" /></svg></button>
          <button type="button" aria-label="Close"><svg width="13" height="13" stroke="#fff" strokeWidth="1.300" aria-hidden="true"><path d="M.5.5l12 12M12.500.5l-12 12" /></svg></button>
        </div>
      </header>
      <nav className="flex h-[25px] shrink-0 items-center text-sm">
        {["File", "View", "Insert", "Charts", "Tools", "Window", "Help"].map((m) => (
          <button key={m} type="button" className="px-[13px]">{m}</button>
        ))}
      </nav>
      <Toolbar />
      <main className="mb-1 flex min-h-0 flex-1 gap-[5px]">
        <aside className="flex w-[368px] shrink-0 flex-col"><MarketWatch /><Navigator /></aside>
        <ChartWindow />
      </main>
      <Toolbox />
    </div>
  );
}
